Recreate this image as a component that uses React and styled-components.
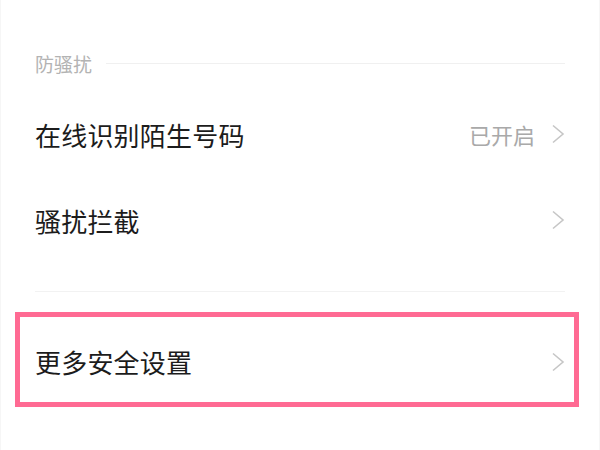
import React from 'react';
import styled, { createGlobalStyle } from 'styled-components';

const GlobalStyle = createGlobalStyle`
    html, body {
        margin: 0;
        padding: 0;
        background: #ffffff;
    }
    body {
        font-family: "Noto Sans CJK SC", "Noto Sans", sans-serif;
    }
`;

const Page = styled.div`
    width: 600px;
    height: 450px;
    box-sizing: border-box;
    padding: 48px 34px 0 34px;
    background: #ffffff;
    border-left: 1px solid #f6f6f6;
    border-right: 1px solid #f6f6f6;
    overflow: hidden;
`;

const SectionHeader = styled.div`
    display: flex;
    align-items: center;
    gap: 14px;
    height: 30px;
    margin-bottom: 13px;
    color: #b3b3b3;
    font-size: 19px;
`;

const HeaderLine = styled.div`
    flex: 1;
    height: 1px;
    background: #f0f0f0;
`;

const Row = styled.div`
    display: flex;
    align-items: center;
    justify-content: space-between;
    height: 86px;
    box-sizing: border-box;
`;

const HighlightRow = styled(Row)`
    height: 95px;
    margin: 0 -14px 0 -20px;
    padding: 4px 9px 0 15px;
    border: 5px solid #ff6a93;
`;

const Label = styled.span`
    font-size: 26px;
    color: #1c1c1c;
    letter-spacing: 0.2px;
`;

const Trailing = styled.div`
    display: flex;
    align-items: center;
    gap: 16px;
`;

const Value = styled.span`
    font-size: 22px;
    color: #a9a9a9;
`;

const Divider = styled.div`
    height: 1px;
    background: #f2f2f2;
    margin: 28px 0 20px 0;
`;

function Chevron() {
    return (
        <svg width="14" height="20" viewBox="0 0 14 20" fill="none">
            <polyline points="2,1.5 12,10 2,18.5" stroke="#c6c6c6" strokeWidth="1.6" strokeLinejoin="miter" />
        </svg>
    );
}

export default function App() {
    return (
        <>
            <GlobalStyle />
            <Page>
                <SectionHeader>
                    <span>防骚扰</span>
                    <HeaderLine />
                </SectionHeader>
                <Row>
                    <Label>在线识别陌生号码</Label>
                    <Trailing>
                        <Value>已开启</Value>
                        <Chevron />
                    </Trailing>
                </Row>
                <Row>
                    <Label>骚扰拦截</Label>
                    <Trailing>
                        <Chevron />
                    </Trailing>
                </Row>
                <Divider />
                <HighlightRow>
                    <Label>更多安全设置</Label>
                    <Trailing>
                        <Chevron />
                    </Trailing>
                </HighlightRow>
            </Page>
        </>
    );
}
